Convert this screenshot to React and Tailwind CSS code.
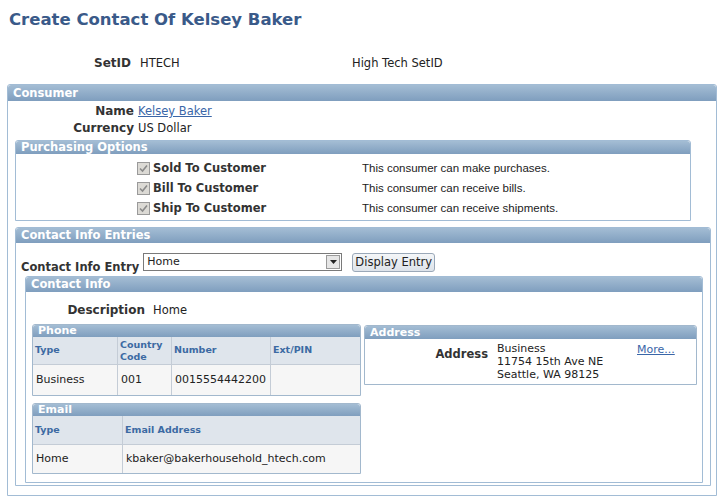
import React from 'react';

// gradient header shared by every group box
const HEAD = 'bg-gradient-to-b from-[#a4bdd4] to-[#7f9ebe] text-white font-bold pl-[5px] rounded-t-[3px]';
const LABEL = 'text-right font-bold text-[#333] text-[12px]';

function Panel({ title, className, headClass = 'h-[16px] leading-[16px] text-[11.5px]', children }) {
  return (
    <div className={`border border-[#a2bcd5] rounded-t-[3px] ${className}`}>
      <div className={`${HEAD} ${headClass}`}>{title}</div>
      {children}
    </div>
  );
}

function Check() {
  return (
    <span className="w-[13px] h-[13px] border border-[#9a9a9a] bg-[#dcdad5] flex items-center justify-center shrink-0">
      <svg width="9" height="9" viewBox="0 0 9 9">
        <path d="M1 4.5 L3.5 7 L8 1.5" fill="none" stroke="#8a8a8a" strokeWidth="1.6" />
      </svg>
    </span>
  );
}

const options = [
  ['Sold To Customer', 'This consumer can make purchases.'],
  ['Bill To Customer', 'This consumer can receive bills.'],
  ['Ship To Customer', 'This consumer can receive shipments.'],
];

export default function App() {
  return (
    <div
      className="w-[725px] h-[497px] bg-white text-[11px] text-[#222] overflow-hidden"
      style={{ fontFamily: '"DejaVu Sans", Verdana, sans-serif' }}
    >
      {/* Title */}
      <h1 className="pl-[9px] pt-[10px] text-[16.5px] leading-[19px] font-bold text-[#3a5a89]">
        Create Contact Of Kelsey Baker
      </h1>

      {/* SetID */}
      <div className="flex items-baseline mt-[25px] h-[14px] text-[11.5px]">
        <span className={`w-[131px] ${LABEL}`}>SetID</span>
        <span className="ml-[9px] w-[212px]">HTECH</span>
        <span>High Tech SetID</span>
      </div>

      {/* Consumer */}
      <Panel title="Consumer" className="ml-[7px] mt-[16px] w-[710px] h-[412px]">
        <div className="flex items-baseline h-[18px] pt-[1px]">
          <span className={`w-[126px] ${LABEL}`}>Name</span>
          <a className="ml-[4px] text-[#3a66a8] underline text-[11.5px]">Kelsey Baker</a>
        </div>
        <div className="flex items-baseline h-[16px]">
          <span className={`w-[126px] ${LABEL}`}>Currency</span>
          <span className="ml-[4px] text-[11.5px]">US Dollar</span>
        </div>

        {/* Purchasing Options */}
        <Panel
          title="Purchasing Options"
          className="ml-[7px] mt-[5px] w-[676px] h-[81px]"
          headClass="h-[13px] leading-[13px] text-[11.5px]"
        >
          <div className="pt-[8px] flex flex-col gap-[7px]">
            {options.map(([label, desc]) => (
              <div key={label} className="flex items-center h-[13px]">
                <span className="ml-[121px]"><Check /></span>
                <span className="ml-[3px] w-[209px] font-bold text-[11.5px] text-[#333]">{label}</span>
                <span
                  className="text-[11.5px]"
                  style={{ fontFamily: '"Liberation Sans", Arial, sans-serif' }}
                >
                  {desc}
                </span>
              </div>
            ))}
          </div>
        </Panel>

        {/* Contact Info Entries */}
        <Panel
          title="Contact Info Entries"
          className="ml-[7px] mt-[6px] w-[696px] h-[259px]"
          headClass="h-[15px] leading-[15px] text-[11.5px]"
        >
          <div className="flex items-start h-[33px] pl-[5px]">
            <span className="mt-[17px] font-bold text-[11.5px] text-[#333] leading-[14px]">Contact Info Entry</span>
            <div className="mt-[10px] ml-[4px] w-[199px] h-[18px] border border-[#7a7a7a] flex items-center justify-between bg-white">
              <span className="pl-[3px]">Home</span>
              <span className="w-[14px] h-[14px] mr-[1px] border border-[#9a9a9a] bg-[#e6e6e6] flex items-center justify-center">
                <svg width="7" height="4" viewBox="0 0 7 4"><path d="M0 0 L7 0 L3.5 4 Z" fill="#222" /></svg>
              </span>
            </div>
            <button className="mt-[10px] ml-[10px] h-[19px] w-[83px] border border-[#9aa8b8] rounded-[3px] bg-gradient-to-b from-[#f4f6f8] to-[#dde3ea] text-[11.5px] text-[#222] leading-[17px]">
              Display Entry
            </button>
          </div>

          {/* Contact Info */}
          <Panel
            title="Contact Info"
            className="ml-[9px] w-[678px] h-[207px]"
            headClass="h-[15px] leading-[15px] text-[11.5px]"
          >
            <div className="flex items-baseline h-[32px] pt-[9px]">
              <span className={`w-[119px] ${LABEL}`}>Description</span>
              <span className="ml-[8px] text-[11.5px]">Home</span>
            </div>

            <div className="flex items-start pl-[6px] gap-[3px]">
              <div className="flex flex-col gap-[7px]">
                {/* Phone */}
                <div className="w-[329px] border border-[#a2b8cd] rounded-t-[3px]">
                  <div className={`${HEAD} h-[12px] leading-[12px] text-[11px] pl-[3px]`}>Phone</div>
                  <div className="grid grid-cols-[85px_54px_99px_1fr] text-[9.5px] font-bold text-[#3c6aa3] bg-[#dfe5ec]">
                    <div className="h-[28px] flex items-center pl-[2px] border-r border-b border-[#c4ccd6]">Type</div>
                    <div className="h-[28px] flex items-center pl-[2px] border-r border-b border-[#c4ccd6] leading-[12px]">Country<br />Code</div>
                    <div className="h-[28px] flex items-center pl-[2px] border-r border-b border-[#c4ccd6]">Number</div>
                    <div className="h-[28px] flex items-center pl-[2px] border-b border-[#c4ccd6]">Ext/PIN</div>
                  </div>
                  <div className="grid grid-cols-[85px_54px_99px_1fr] bg-[#f6f6f6] text-[11px]">
                    <div className="h-[30px] flex items-center pl-[3px] border-r border-[#c4ccd6]">Business</div>
                    <div className="h-[30px] flex items-center pl-[3px] border-r border-[#c4ccd6]">001</div>
                    <div className="h-[30px] flex items-center pl-[3px] border-r border-[#c4ccd6]">0015554442200</div>
                    <div className="h-[30px]"></div>
                  </div>
                </div>

                {/* Email */}
                <div className="w-[329px] border border-[#a2b8cd] rounded-t-[3px]">
                  <div className={`${HEAD} h-[12px] leading-[12px] text-[11px] pl-[5px]`}>Email</div>
                  <div className="grid grid-cols-[90px_1fr] text-[9.5px] font-bold text-[#3c6aa3] bg-[#dfe5ec]">
                    <div className="h-[29px] flex items-center pl-[2px] border-r border-b border-[#c4ccd6]">Type</div>
                    <div className="h-[29px] flex items-center pl-[2px] border-b border-[#c4ccd6]">Email Address</div>
                  </div>
                  <div className="grid grid-cols-[90px_1fr] bg-[#f6f6f6] text-[11px]">
                    <div className="h-[28px] flex items-center pl-[3px] border-r border-[#c4ccd6]">Home</div>
                    <div className="h-[28px] flex items-center pl-[3px]">kbaker@bakerhousehold_htech.com</div>
                  </div>
                </div>
              </div>

              {/* Address */}
              <div className="w-[333px] mt-[1px] border border-[#a2b8cd] rounded-t-[3px]">
                <div className={`${HEAD} h-[13px] leading-[13px] text-[11px] pl-[5px]`}>Address</div>
                <div className="flex h-[45px] pt-[3px]">
                  <span className="w-[123px] text-right font-bold text-[#333] mt-[4px] text-[11.5px]">Address</span>
                  <div className="ml-[9px] w-[140px] leading-[13px]">
                    <div>Business</div>
                    <div>11754 15th Ave NE</div>
                    <div>Seattle, WA 98125</div>
                  </div>
                  <a className="text-[#3a66a8] underline leading-[13px] mt-[1px]">More...</a>
                </div>
              </div>
            </div>
          </Panel>
        </Panel>
      </Panel>
    </div>
  );
}
